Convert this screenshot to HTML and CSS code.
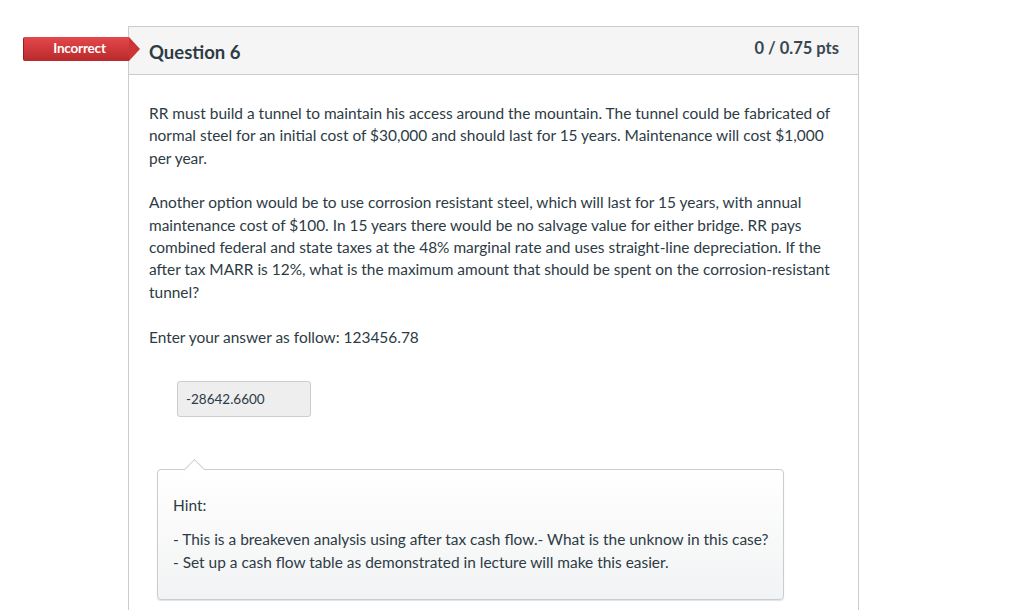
FILE: index.html
```html
<!DOCTYPE html>
<html>
<head>
<meta charset="utf-8">
<link rel="stylesheet" href="styles.css">
</head>
<body>
<div class="page">
  <div class="card">
    <div class="badge">Incorrect</div>
    <div class="card-header">
      <span class="title">Question 6</span>
      <span class="pts">0 / 0.75 pts</span>
    </div>
    <div class="card-body">
      <p>RR must build a tunnel to maintain his access around the mountain. The tunnel could be fabricated of normal steel for an initial cost of $30,000 and should last for 15 years. Maintenance will cost $1,000 per year.</p>
      <p>Another option would be to use corrosion resistant steel, which will last for 15 years, with annual maintenance cost of $100. In 15 years there would be no salvage value for either bridge. RR pays combined federal and state taxes at the 48% marginal rate and uses straight-line depreciation. If the after tax MARR is 12%, what is the maximum amount that should be spent on the corrosion-resistant tunnel?</p>
      <p>Enter your answer as follow: 123456.78</p>
      <div class="answer">-28642.6600</div>
      <div class="hint">
        <p class="hint-title">Hint:</p>
        <p class="hint-line">- This is a breakeven analysis using after tax cash flow.- What is the unknow in this case?</p>
        <p class="hint-line">- Set up a cash flow table as demonstrated in lecture will make this easier.</p>
      </div>
    </div>
  </div>
</div>
</body>
</html>
```
FILE: styles.css
```css
html, body {
  margin: 0;
  padding: 0;
  background: #fff;
}
body {
  font-family: Lato, "Noto Sans", sans-serif;
  color: #2d3b45;
  overflow: hidden;
  height: 610px;
}
.page {
  padding-top: 26px;
  padding-left: 128px;
}
.card {
  position: relative;
  width: 729px;
  border: 1px solid #c7cdd1;
  border-bottom: none;
  min-height: 700px;
}
.badge {
  position: absolute;
  left: -106px;
  top: 10px;
  width: 106px;
  height: 24px;
  line-height: 23px;
  box-sizing: border-box;
  padding-left: 6px;
  text-align: center;
  color: #fff;
  font-size: 13.5px;
  font-weight: bold;
  letter-spacing: -0.2px;
  background: linear-gradient(#e4484b, #b8292b);
  border-left: 1px solid #9b1c1e;
  border-radius: 2px 0 0 2px;
  z-index: 2;
}
.badge::after {
  content: "";
  position: absolute;
  right: -11px;
  top: 0;
  width: 0;
  height: 0;
  border-top: 12px solid transparent;
  border-bottom: 12px solid transparent;
  border-left: 11px solid #cc3538;
}
.card-header {
  height: 47px;
  background: #f5f5f5;
  border-bottom: 1px solid #c7cdd1;
  display: flex;
  justify-content: space-between;
  align-items: flex-start;
  padding: 0 19px 0 20px;
}
.title {
  font-size: 18.5px;
  font-weight: bold;
  margin-top: 14px;
}
.pts {
  font-size: 16.5px;
  font-weight: bold;
  margin-top: 11px;
  color: #3a4650;
}
.card-body {
  padding: 27px 20px 20px 20px;
  font-size: 15.45px;
  line-height: 22.3px;
}
.card-body p {
  margin: 0 0 22.6px 0;
}
.answer {
  margin: 33px 0 0 28px;
  width: 132px;
  height: 34px;
  box-sizing: content-box;
  border: 1px solid #c7cdd1;
  border-radius: 3px;
  background: #eeeeee;
  font-size: 13.5px;
  line-height: 34px;
  text-indent: 8px;
}
.hint {
  position: relative;
  margin: 52px 0 0 8px;
  width: 625px;
  height: 129px;
  box-sizing: content-box;
  border: 1px solid #c7cdd1;
  border-radius: 4px;
  background: linear-gradient(#ffffff, #f2f3f4);
  box-shadow: 0 1px 1px rgba(0,0,0,0.12);
}
.hint::before {
  content: "";
  position: absolute;
  left: 29px;
  top: -8px;
  width: 14px;
  height: 14px;
  background: #fff;
  border-top: 1px solid #c7cdd1;
  border-left: 1px solid #c7cdd1;
  transform: rotate(45deg);
}
.hint .hint-title {
  margin: 24px 0 0 15px;
}
.hint .hint-line {
  margin: 0 0 0 15px;
  line-height: 23px;
}
.hint .hint-title + .hint-line {
  margin-top: 12px;
}
```
